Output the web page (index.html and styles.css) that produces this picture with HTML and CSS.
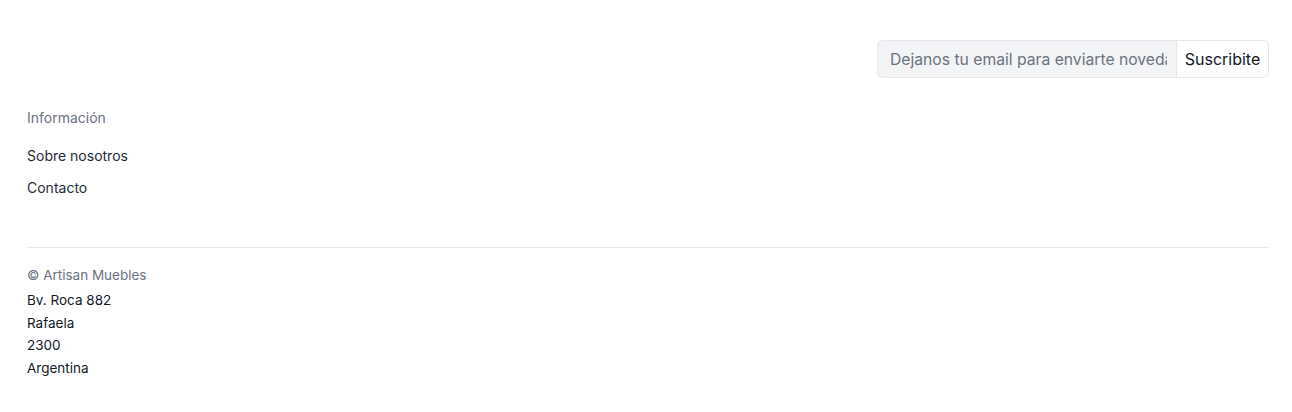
FILE: index.html
```html
<!DOCTYPE html>
<html lang="es">
<head>
<meta charset="utf-8">
<link rel="stylesheet" href="styles.css">
</head>
<body>
<footer class="footer">
  <div class="subscribe-row">
    <form class="subscribe">
      <input class="subscribe-input" type="email" placeholder="Dejanos tu email para enviarte novedades">
      <button class="subscribe-btn" type="button">Suscribite</button>
    </form>
  </div>
  <div class="links">
    <h3 class="links-title">Información</h3>
    <ul class="links-list">
      <li><a href="#">Sobre nosotros</a></li>
      <li><a href="#">Contacto</a></li>
    </ul>
  </div>
  <div class="bottom">
    <p class="copy">© Artisan Muebles</p>
    <address class="address">
      <span>Bv. Roca 882</span>
      <span>Rafaela</span>
      <span>2300</span>
      <span>Argentina</span>
    </address>
  </div>
</footer>
</body>
</html>
```

FILE: styles.css
```css
* { box-sizing: border-box; }
html, body { margin: 0; padding: 0; background: #fff; }
body { font-family: Inter, "Noto Sans", sans-serif; color: #1f2937; }

.footer {
  padding: 40px 23px 0 27px;
}

.subscribe-row {
  display: flex;
  justify-content: flex-end;
}
.subscribe {
  display: flex;
  margin: 0;
  height: 38px;
}
.subscribe-input {
  width: 299px;
  height: 38px;
  padding: 6px 9px 6px 12px;
  font-family: inherit;
  font-size: 15.7px;
  color: #374151;
  background: #f3f4f6;
  border: 1px solid #e5e7eb;
  border-right: none;
  border-radius: 6px 0 0 6px;
  outline: none;
}
.subscribe-input::placeholder { color: #6b7280; }
.subscribe-btn {
  height: 38px;
  width: 93px;
  padding: 0;
  font-family: inherit;
  font-size: 16px;
  color: #111827;
  background: #fff;
  border: 1px solid #e5e7eb;
  border-radius: 0 6px 6px 0;
}

.links { padding-top: 30px; }
.links-title {
  margin: 0;
  font-size: 14px;
  font-weight: 400;
  line-height: 20px;
  color: #6b7280;
}
.links-list {
  list-style: none;
  margin: 17px 0 0;
  padding: 0;
  display: flex;
  flex-direction: column;
  gap: 11px;
}
.links-list li { display: block; line-height: 20px; }
.links-list a {
  font-size: 14px;
  line-height: 20px;
  color: #1f2937;
  text-decoration: none;
}

.bottom {
  margin-top: 49px;
  border-top: 1px solid #e5e7eb;
  padding-top: 17px;
}
.copy {
  margin: 0 0 4px;
  font-size: 13.5px;
  line-height: 20px;
  color: #6b7280;
}
.address {
  font-style: normal;
  display: flex;
  flex-direction: column;
  font-size: 13.5px;
  line-height: 22.5px;
  color: #111827;
}
```
